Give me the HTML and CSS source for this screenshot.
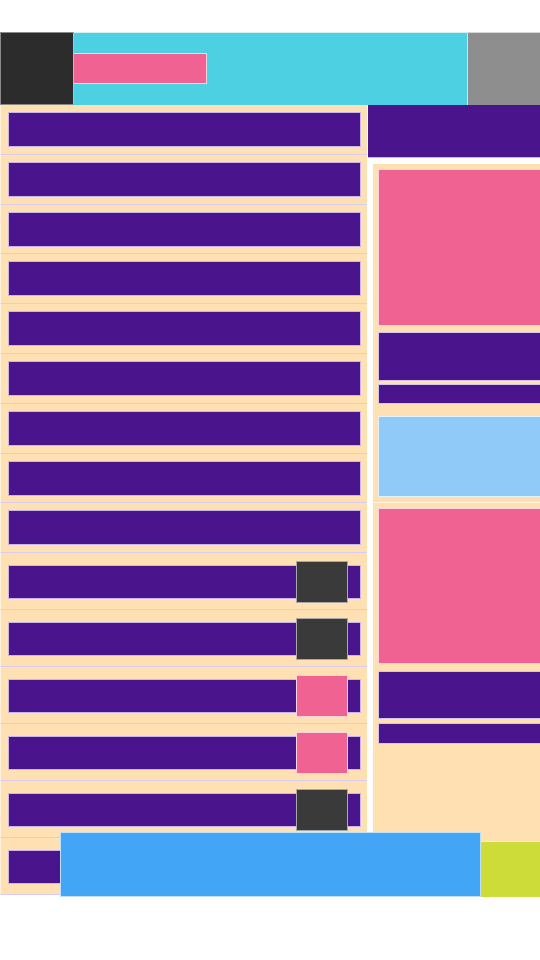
FILE: index.html
```html
<!DOCTYPE html>
<html lang="en">
<head>
    <meta charset="UTF-8">
    <meta name="viewport" content="width=device-width, initial-scale=1.0">
    <title>Layout</title>
    <link rel="stylesheet" href="styles.css">
</head>
<body>
    <div class="page">
        <header class="topbar">
            <div class="logo"></div>
            <div class="title-area">
                <div class="title-pill"></div>
            </div>
            <div class="avatar"></div>
        </header>

        <main class="main">
            <section class="list">
                <div class="row"><div class="bar"></div></div>
                <div class="row"><div class="bar"></div></div>
                <div class="row"><div class="bar"></div></div>
                <div class="row"><div class="bar"></div></div>
                <div class="row"><div class="bar"></div></div>
                <div class="row"><div class="bar"></div></div>
                <div class="row"><div class="bar"></div></div>
                <div class="row"><div class="bar"></div></div>
                <div class="row"><div class="bar"></div></div>

                <div class="row row-tall"><div class="bar"><span class="thumb"></span></div></div>
                <div class="row row-tall"><div class="bar"><span class="thumb"></span></div></div>
                <div class="row row-tall"><div class="bar"><span class="thumb thumb-pink"></span></div></div>
                <div class="row row-tall"><div class="bar"><span class="thumb thumb-pink"></span></div></div>
                <div class="row row-tall"><div class="bar"><span class="thumb"></span></div></div>
                <div class="row row-tall"><div class="bar"><span class="thumb"></span></div></div>
            </section>

            <aside class="side">
                <div class="side-head"></div>
                <div class="card card-first">
                    <div class="cover"></div>
                    <div class="heading"></div>
                    <div class="subline"></div>
                    <div class="note"></div>
                </div>
                <div class="card card-second">
                    <div class="cover"></div>
                    <div class="heading"></div>
                    <div class="subline"></div>
                </div>
                <div class="side-foot"></div>
            </aside>

            <div class="action-bar"></div>
        </main>
    </div>
</body>
</html>
```

FILE: styles.css
```css
body {
    margin: 0;
    font-family: "Liberation Sans", Arial, sans-serif;
    background: #fff;
}
.page {
    width: 540px;
    padding-top: 32px;
}

/* top bar */
.topbar {
    display: flex;
    height: 73px;
}
.logo {
    width: 74px;
    background: #2c2c2c;
    border: 1px solid #8a8a8a;
    border-right-color: #bdbdbd;
    box-sizing: border-box;
}
.title-area {
    flex: 1;
    background: #4dd0e1;
    border-top: 1px solid #d0f2f6;
    padding-top: 20px;
    box-sizing: border-box;
}
.title-pill {
    width: 133px;
    height: 31px;
    background: #f06292;
    border: 1px solid #fbd3e0;
    border-left: none;
    box-sizing: border-box;
}
.avatar {
    width: 73px;
    background: #8e8e8e;
    border-left: 1px solid #e0e0e0;
    border-top: 1px solid #d6d6d6;
    box-sizing: border-box;
}

/* main area */
.main {
    position: relative;
    display: flex;
    height: 792px;
}
.list {
    width: 367px;
}
.row {
    height: 49.8px;
    box-sizing: border-box;
    padding: 7px 6px 0 7px;
    background: #ffe0b2;
    border-left: 1px solid #fff3e0;
    border-bottom: 1px solid #d9ccf2;
}
.bar {
    height: 35px;
    background: #4a148c;
    border: 1px solid #c9b6ea;
    box-sizing: border-box;
}
.row-tall {
    height: 57px;
    padding-top: 12px;
}
.row-tall .bar {
    height: 34px;
    display: flex;
    justify-content: flex-end;
    align-items: center;
    padding-right: 12px;
}
.thumb {
    width: 52px;
    height: 42px;
    flex-shrink: 0;
    background: #3a3a3a;
    border: 1px solid #a8a8a8;
    box-sizing: border-box;
}
.thumb-pink {
    background: #f06292;
    border-color: #fbd3e0;
}

/* sidebar */
.side {
    width: 173px;
    display: flex;
    flex-direction: column;
}
.side-head {
    height: 53px;
    margin-left: 1px;
    background: #4a148c;
    border-bottom: 1px solid #c9b6ea;
    box-sizing: border-box;
}
.card {
    margin-left: 6px;
    height: 338px;
    box-sizing: border-box;
    padding: 5px 0 0 5px;
    background: #ffe0b2;
}
.card-first {
    margin-top: 6px;
    height: 339px;
    border-bottom: 1px solid #fff3e0;
}
.cover {
    height: 157px;
    background: #f06292;
    border: 1px solid #fbd3e0;
    border-right: none;
    box-sizing: border-box;
    margin-bottom: 6px;
}
.heading {
    height: 49px;
    background: #4a148c;
    border: 1px solid #d4c4ee;
    border-right: none;
    box-sizing: border-box;
    margin-bottom: 3px;
}
.subline {
    height: 20px;
    background: #4a148c;
    border: 1px solid #d4c4ee;
    border-right: none;
    box-sizing: border-box;
    margin-bottom: 12px;
}
.note {
    height: 81px;
    background: #90caf9;
    border: 1px solid #e3f2fd;
    border-right: none;
    box-sizing: border-box;
}
.card-second .cover {
    height: 156px;
    margin-bottom: 7px;
}
.card-second .heading {
    height: 48px;
    margin-bottom: 4px;
}
.card-second .subline {
    height: 21px;
}
.side-foot {
    margin-left: auto;
    width: 59px;
    height: 56px;
    background: #cddc39;
    border-top: 1px solid #f3f0d0;
    box-sizing: border-box;
}

/* floating action bar over the bottom of the list */
.action-bar {
    position: absolute;
    left: 60px;
    bottom: 0;
    width: 421px;
    height: 65px;
    box-sizing: border-box;
    background: #42a5f5;
    border: 1px solid #bfe0fb;
}
```
